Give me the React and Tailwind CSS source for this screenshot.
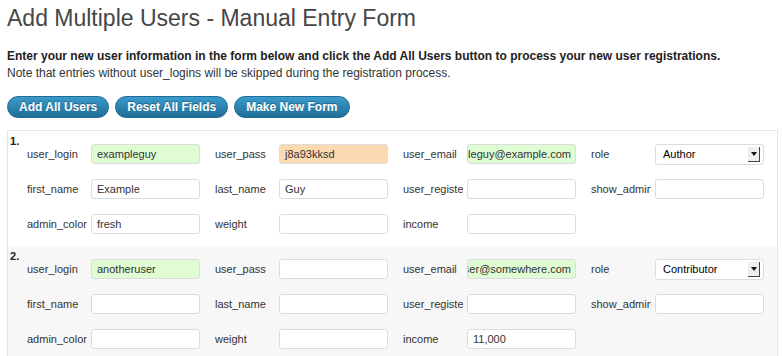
const users = [
  {
    user_login: { value: 'exampleguy', tone: 'ok' },
    user_pass: { value: 'j8a93kksd', tone: 'warn' },
    user_email: { value: 'exampleguy@example.com', tone: 'ok' },
    role: 'Author',
    first_name: 'Example',
    last_name: 'Guy',
    admin_color: 'fresh',
    income: ''
  },
  {
    user_login: { value: 'anotheruser', tone: 'ok' },
    user_pass: { value: '', tone: '' },
    user_email: { value: 'anotheruser@somewhere.com', tone: 'ok' },
    role: 'Contributor',
    first_name: '',
    last_name: '',
    admin_color: '',
    income: '11,000'
  }
];

const tones = {
  ok: 'bg-[#dffcd3]',
  warn: 'bg-[#fdd9b1]',
  '': 'bg-white'
};

function Field({ value = '', tone = '', alignEnd = false }) {
  return (
    <div
      className={`flex h-[20px] w-[109px] shrink-0 items-center overflow-hidden whitespace-nowrap rounded-[3px] border border-[#dcdcdc] text-[11px] text-[#333] ${tones[tone]} ${alignEnd ? 'justify-end pr-[4px]' : 'pl-[5px]'}`}
    >
      {value}
    </div>
  );
}

function Select({ value }) {
  return (
    <div className="flex h-[21px] w-[109px] shrink-0 items-center justify-between rounded-[3px] border border-[#dcdcdc] bg-white pl-[7px] pr-[3px] text-[11px] text-black">
      <span>{value}</span>
      <span className="flex h-[15px] w-[12px] items-center justify-center border-r border-b border-[#444] bg-[#eeeeee]">
        <span className="h-0 w-0 border-x-[3px] border-t-[4px] border-x-transparent border-t-[#111]" />
      </span>
    </div>
  );
}

function Cell({ label, children }) {
  return (
    <div className="flex h-[20px] items-start">
      <div className="mr-[4px] flex h-[20px] w-[60px] shrink-0 items-center overflow-hidden whitespace-nowrap text-[11px] text-[#333]">{label}</div>
      {children}
    </div>
  );
}

function UserRow({ index, user, shaded }) {
  return (
    <div className={`pt-[4px] pb-[12px] ${shaded ? 'bg-[#f7f7f7]' : 'bg-white'}`}>
      <div className="h-[9px] pl-[2px] text-[11px] leading-[12px] font-bold text-[#222]">{index}.</div>
      <div className="grid auto-rows-[20px] grid-cols-[173px_173px_173px_173px] gap-x-[15px] gap-y-[15px] pl-[19px]">
        <Cell label="user_login"><Field {...user.user_login} /></Cell>
        <Cell label="user_pass"><Field {...user.user_pass} /></Cell>
        <Cell label="user_email"><Field {...user.user_email} alignEnd /></Cell>
        <Cell label="role"><Select value={user.role} /></Cell>
        <Cell label="first_name"><Field value={user.first_name} /></Cell>
        <Cell label="last_name"><Field value={user.last_name} /></Cell>
        <Cell label="user_registered"><Field /></Cell>
        <Cell label="show_admin_bar_front"><Field /></Cell>
        <Cell label="admin_color"><Field value={user.admin_color} /></Cell>
        <Cell label="weight"><Field /></Cell>
        <Cell label="income"><Field value={user.income} /></Cell>
      </div>
    </div>
  );
}

const buttons = ['Add All Users', 'Reset All Fields', 'Make New Form'];

export default function App() {
  return (
    <div className="h-[356px] overflow-hidden bg-white pl-[7px] pr-[4px] font-['Liberation_Sans',Arial,sans-serif] text-[#333]">
      <h1 className="pt-[4px] text-[23px] leading-[29px] font-normal text-[#464646]">Add Multiple Users - Manual Entry Form</h1>

      <div className="mt-[15px] text-[12px] leading-[16.5px]">
        <p className="font-bold text-[#222]">
          Enter your new user information in the form below and click the Add All Users button to process your new user registrations.
        </p>
        <p>Note that entries without user_logins will be skipped during the registration process.</p>
      </div>

      <div className="mt-[15px] flex gap-[6px]">
        {buttons.map((label) => (
          <button
            key={label}
            type="button"
            className="h-[22px] rounded-full border border-[#1f6c94] bg-gradient-to-b from-[#3a9bcb] to-[#1f6d97] px-[11px] text-[12px] font-bold text-white [text-shadow:0_-1px_0_rgba(0,0,0,0.3)]"
          >
            {label}
          </button>
        ))}
      </div>

      <div className="mt-[12px] border-x border-t border-[#e6e6e6]">
        {users.map((user, i) => (
          <UserRow key={i} index={i + 1} user={user} shaded={i % 2 === 1} />
        ))}
      </div>
    </div>
  );
}
